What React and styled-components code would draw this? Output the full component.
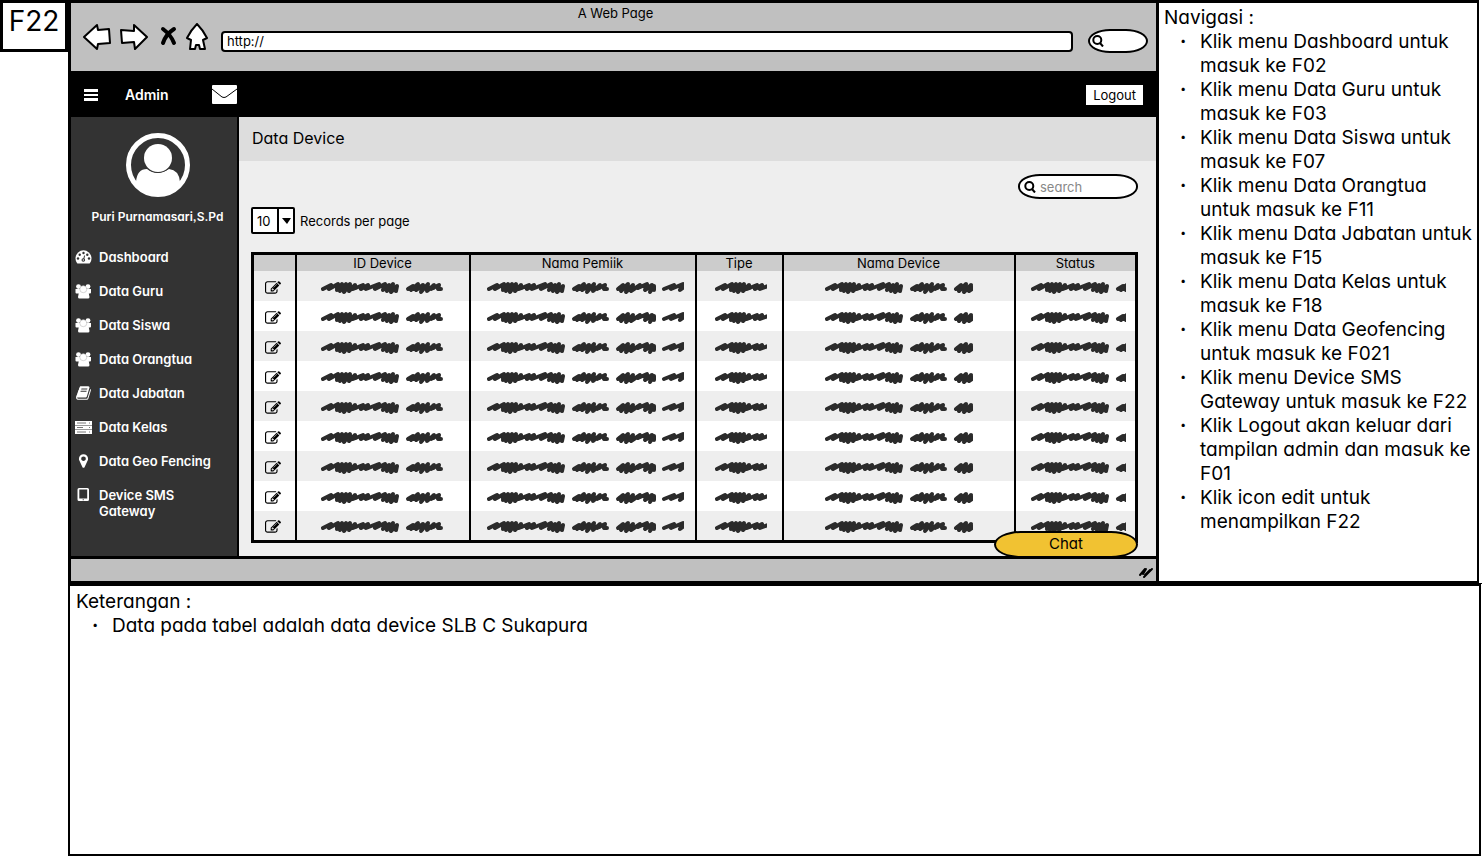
import React from "react";
import styled, { createGlobalStyle } from "styled-components";

const Global = createGlobalStyle`
  *, *::before, *::after { box-sizing: border-box; }
  body { margin: 0; background: #fff; color: #000; font: 13px/16px Inter, "Liberation Sans", sans-serif; font-feature-settings: "cv11", "ss03"; }
  ul, h1, h2, p { margin: 0; padding: 0; font-size: inherit; font-weight: inherit; }
  ul { list-style: none; }
  button, input, select { font: inherit; color: inherit; font-feature-settings: inherit; }
  svg { display: block; flex: none; }
`;

const Page = styled.div`
  display: flex;
  align-items: flex-start;
  min-height: 100vh;
`;
const Tag = styled.h1`
  flex: none;
  width: 68px;
  height: 52px;
  border: 3px solid #000;
  font-size: 28px;
  line-height: 36px;
  text-align: center;
`;
const Board = styled.main`
  flex: 1;
  min-width: 0;
  min-height: 100vh;
  display: flex;
  flex-direction: column;
`;
const Upper = styled.div`
  display: flex;
  border-bottom: 1px solid #000;
`;
const Browser = styled.section`
  flex: 1;
  min-width: 0;
  display: flex;
  flex-direction: column;
  border: 3px solid #000;
  border-width: 3px 2px 2px 3px;
  background: #c0c0c0;
`;
const Chrome = styled.header`
  height: 68px;
  padding: 2px 8px 0 12px;
`;
const PageTitle = styled.p`
  text-align: center;
  line-height: 17px;
`;
const Tools = styled.div`
  display: flex;
  align-items: center;
  padding-top: 1px;
`;
const ToolGroup = styled.div`
  display: flex;
  align-items: center;
  padding-bottom: 8px;
`;
const ToolButton = styled.button`
  border: 0;
  padding: 0;
  background: none;
  margin-right: ${(p) => p.$gap}px;
`;
const Address = styled.input`
  flex: 1;
  min-width: 0;
  height: 21px;
  margin: 0 15px 0 11px;
  padding: 0 4px;
  border: 2px solid #000;
  border-radius: 4px;
  background: #fff;
`;
const Pill = styled.label`
  display: flex;
  align-items: center;
  gap: 4px;
  width: ${(p) => p.$w}px;
  height: ${(p) => p.$h}px;
  padding: 0 5px 0 ${(p) => p.$pad}px;
  border: 2px solid #000;
  border-radius: 22px / 12px;
  background: #fff;
`;
const PillInput = styled.input`
  flex: 1;
  min-width: 0;
  border: 0;
  padding: 0;
  outline: 0;
  background: none;
  &::placeholder { color: #888; opacity: 1; }
`;
const TopBar = styled.div`
  display: flex;
  align-items: center;
  height: 46px;
  padding: 1px 13px 0;
  background: #000;
  color: #fff;
`;
const Brand = styled.span`
  margin: 0 43px 0 27px;
  font-size: 14px;
  font-weight: 600;
`;
const Logout = styled.button`
  margin-left: auto;
  height: 20px;
  padding: 0 7px;
  border: 0;
  background: #fff;
  color: #000;
`;
const Body = styled.div`
  display: flex;
  height: 442px;
  border-bottom: 3px solid #000;
`;
const Side = styled.aside`
  flex: none;
  width: 168px;
  border-right: 2px solid #000;
  background: #333;
  color: #fff;
  font-weight: 600;
`;
const Profile = styled.div`
  display: flex;
  flex-direction: column;
  align-items: center;
  gap: 12px;
  padding: 16px 0 0 7px;
  font-size: 12px;
`;
const Menu = styled.ul`
  display: flex;
  flex-direction: column;
  gap: 18px;
  padding: 24px 16px 0 4px;
`;
const MenuLink = styled.a`
  display: flex;
  gap: 7px;
  color: inherit;
  text-decoration: none;
`;
const Content = styled.section`
  flex: 1;
  min-width: 0;
  display: flex;
  flex-direction: column;
  background: #eee;
`;
const Heading = styled.h2`
  height: 44px;
  padding: 0 13px;
  background: #ddd;
  font-size: 16px;
  line-height: 42px;
`;
const Panel = styled.div`
  position: relative;
  padding: 13px 18px 0 12px;
`;
const SearchRow = styled.div`
  display: flex;
  justify-content: flex-end;
`;
const Records = styled.div`
  display: flex;
  align-items: center;
  gap: 5px;
  padding: 8px 0 18px;
`;
const SelectBox = styled.span`
  display: grid;
  grid-template-columns: 24px 16px;
  width: 44px;
  height: 27px;
  border: 2px solid #000;
  border-radius: 2px;
  background: #fff;
`;
const Select = styled.select`
  grid-area: 1 / 1 / 2 / 3;
  appearance: none;
  border: 0;
  padding: 0 4px;
  background: none;
`;
const Arrow = styled.span`
  grid-area: 1 / 2 / 2 / 3;
  display: grid;
  place-items: center;
  border-left: 2px solid #000;
  pointer-events: none;
`;
const Table = styled.table`
  width: 100%;
  table-layout: fixed;
  border: 3px solid #000;
  border-collapse: collapse;
`;
const Th = styled.th`
  width: ${(p) => p.$w};
  height: 16px;
  padding: 0;
  border-left: 2px solid #000;
  background: #ccc;
  font-weight: 400;
  line-height: 16px;
`;
const Row = styled.tr`
  height: 30px;
  background: #fff;
  &:nth-child(odd) { background: #eee; }
`;
const Td = styled.td`
  padding: 3px 0 0 ${(p) => p.$pad || 0}px;
  border-left: 2px solid #000;
  svg, button { margin: 0 auto; }
`;
const EditButton = styled.button`
  display: block;
  border: 0;
  padding: 0 2px 0 0;
  background: none;
`;
const Chat = styled.button`
  position: absolute;
  right: 18px;
  bottom: -15px;
  width: 144px;
  height: 27px;
  border: 2px solid #000;
  border-radius: 28px / 14px;
  background: #f1c232;
  font-size: 15px;
`;
const StatusBar = styled.footer`
  display: flex;
  justify-content: flex-end;
  align-items: center;
  height: 22px;
  padding: 4px 2px 0 0;
`;
const Notes = styled.aside`
  flex: none;
  width: 321px;
  border: 2px solid #000;
  border-width: 3px 2px 2px 1px;
  margin-right: 3px;
  padding: 3px 3px 3px 5px;
  font-size: 19px;
  line-height: 24px;
`;
const Caption = styled.section`
  flex: 1;
  border: 2px solid #000;
  padding: 4px 6px;
  margin-right: 1px;
  font-size: 19px;
  line-height: 24px;
`;
const Bullets = styled.ul`
  padding-left: 16px;
  li { display: flex; }
  li::before { content: "·"; flex: none; width: 20px; font-weight: 700; }
`;

const Svg = ({ w, h, box, children, ...rest }) => (
  <svg width={w} height={h} viewBox={box} fill="currentColor" aria-hidden="true" {...rest}>{children}</svg>
);
const EDIT = "M888 1184l116-116-152-152-116 116v56h96v96h56zm440-720q-16-16-33 1l-350 350q-17 17-1 33t33-1l350-350q17-17 1-33zm80 594v190q0 119-84.5 203.5t-203.5 84.5h-832q-119 0-203.5-84.5t-84.5-203.5v-832q0-119 84.500-203.5t203.5-84.5h832q63 0 117 25 15 7 18 23 3 17-9 29l-49 49q-14 14-32 8-23-6-45-6h-832q-66 0-113 47t-47 113v832q0 66 47 113t113 47h832q66 0 113-47t47-113v-126q0-13 9-22l64-64q15-15 35-7t20 29zm-96-738l288 288-672 672h-288v-288zm444 132l-92 92-288-288 92-92q28-28 68-28t68 28l152 152q28 28 28 68t-28 68z";
const BOOK = "M1703 478q40 57 18 129l-275 906q-19 64-76.5 107.5t-122.5 43.5h-923q-77 0-148.5-53.5t-99.5-131.5q-24-67-2-127 0-4 3-27t4-37q1-8-3-21.5t-3-19.5q2-11 8-21t16.5-23.5 16.5-23.5q23-38 45-91.5t30-91.5q3-10 .5-30t-.5-28q3-11 17-28t17-23q21-36 42-92t25-90q1-9-2.5-32t.5-28q4-13 22-30.5t22-22.5q19-26 42.5-84.5t27.5-96.5q1-8-3-25.5t-2-26.5q2-8 9-18t18-23 17-21q8-12 16.5-30.5t15-35 16-36 19.5-32 26.5-23.5 36-11.5 47.5 5.5l-1 3q38-9 51-9h761q74 0 114 56t18 130l-274 906q-36 119-71.5 153.5t-128.5 34.5h-869q-27 0-38 15-11 16-1 43 24 70 144 70h923q29 0 56-15.5t35-41.5l300-987q7-22 5-57 38 15 59 43zm-1064 2q-4 13 2 22.5t20 9.5h608q13 0 25.5-9.5t16.5-22.5l21-64q4-13-2-22.5t-20-9.5h-608q-13 0-25.5 9.5t-16.5 22.5zm-83 256q-4 13 2 22.5t20 9.5h608q13 0 25.5-9.5t16.5-22.5l21-64q4-13-2-22.5t-20-9.5h-608q-13 0-25.5 9.5t-16.5 22.5z";
const PIN = "M1152 640q0-106-75-181t-181-75-181 75-75 181 75 181 181 75 181-75 75-181zm256 0q0 109-33 179l-364 774q-16 33-47.5 52t-67.5 19-67.5-19-46.5-52l-365-774q-33-70-33-179 0-212 150-362t362-150 362 150 150 362z";

const Gauge = () => (
  <Svg w="17" h="16" box="0 0 17 16">
    <path d="M2 14A8 8 0 1 1 15 14Q14.500 14.500 14 14.500H3Q2.400 14.500 2 14Z" />
    <g fill="#333"><circle cx="3" cy="9.500" r="1.200" /><circle cx="4.700" cy="5.700" r="1.200" /><circle cx="8.500" cy="4" r="1.200" /><circle cx="12.300" cy="5.700" r="1.200" /><circle cx="14" cy="9.500" r="1.200" /><circle cx="8.300" cy="11" r="1.800" /></g>
    <path d="M8.500 11L9.600 6.500" stroke="#333" strokeWidth="1" />
    <circle cx="8.300" cy="11" r=".7" />
  </Svg>
);
const Users = () => (
  <Svg w="17" h="16" box="0 0 17 16">
    <circle cx="3.500" cy="3.600" r="2.400" /><circle cx="13" cy="3.600" r="2.400" />
    <path d="M.5 6h15.500v3.500q0 1-1 1h-1.200l.7 3.500q0 1.500-1.500 1.500H4.500Q3 15.500 3 14l.7-3.500H1.500q-1 0-1-1z" />
    <circle cx="8.300" cy="6.200" r="3.500" stroke="#bbb" strokeWidth=".6" />
  </Svg>
);
const Book = () => <Svg w="17" h="16" box="0 0 1792 1792"><path d={BOOK} /></Svg>;
const Server = () => (
  <Svg w="17" h="16" box="0 0 17 16">
    <path d="M0 2h17v4H0zM0 6.500h17v4H0zM0 11h17v4H0z" />
    <path d="M2 4h9M2 8.500h6M2 13h9M14 4h1M14 8.500h1M14 13h1" stroke="#777" strokeWidth="1" />
  </Svg>
);
const Pin = () => <Svg w="17" h="16" box="0 0 1792 1792"><path d={PIN} /></Svg>;
const Tablet = () => (
  <Svg w="17" h="16" box="0 0 17 16"><path fillRule="evenodd" d="M4 1h8.500q1.500 0 1.500 1.500v10q0 1.500-1.500 1.500H4q-1.500 0-1.500-1.500v-10Q2.500 1 4 1zM4.300 2.600v8.800h7.900V2.600zM7.700 12.200v1h1.100v-1z" /></Svg>
);
const Lens = ({ size }) => (
  <Svg w={size} h={size} box="0 0 12 12"><g fill="none" stroke="#000" strokeWidth="2"><circle cx="5.300" cy="5" r="4" /><path d="M8 8l3 3.500" /></g></Svg>
);

/* Scribbled placeholder copy: one slanted zigzag stroke per word. */
const WORDS = [
  "M2 9L10 5 8 9 17 4 16 10 21 4 19 11 25 4 23 12 29 4 28 11 34 5 32 9 42 5 40 9 47 5 45 9 58 4 54 9 64 4 62 10 68 5 66 11 72 4 70 12 76 6 75 11",
  "M87 9L92 6 90 10 97 4 95 10 102 5 100 12 107 4 106 11 113 5 110 9 118 5 117 9 120 9",
  "M131 9L136 5 134 11 141 4 139 12 146 5 144 11 153 5 151 8 160 4 158 10 165 5 163 12 167 6 167 10",
  "M177 9L187 5 184 9 196 4 193 10 201 4",
];
const Scribble = ({ w }) => (
  <svg width={w} height="16" viewBox={`0 0 ${w} 16`} fill="none" stroke="#2b2b2b" strokeWidth="4" strokeLinecap="round" strokeLinejoin="round" aria-hidden="true">
    {WORDS.map((d) => <path key={d} d={d} />)}
    <path d="M16 8H34M63 8H74M89 9H95M98 8H112M133 8H144M159 8H167" />
  </svg>
);

const MENU = [
  [Gauge, "Dashboard"], [Users, "Data Guru"], [Users, "Data Siswa"], [Users, "Data Orangtua"],
  [Book, "Data Jabatan"], [Server, "Data Kelas"], [Pin, "Data Geo Fencing"], [Tablet, "Device SMS Gateway"],
];
const COLUMNS = [
  { title: "ID Device", width: "174px", text: 124, pad: 0 },
  { title: "Nama Pemiik", width: "226px", text: 197, pad: 6 },
  { title: "Tipe", width: "87px", text: 52, pad: 4 },
  { title: "Nama Device", width: "auto", text: 148, pad: 0 },
  { title: "Status", width: "122px", text: 95, pad: 6 },
];
const NAV = [
  "Klik menu Dashboard untuk masuk ke F02", "Klik menu Data Guru untuk masuk ke F03",
  "Klik menu Data Siswa untuk masuk ke F07", "Klik menu Data Orangtua untuk masuk ke F11",
  "Klik menu Data Jabatan untuk masuk ke F15", "Klik menu Data Kelas untuk masuk ke F18",
  "Klik menu Data Geofencing untuk masuk ke F021", "Klik menu Device SMS Gateway untuk masuk ke F22",
  "Klik Logout akan keluar dari tampilan admin dan masuk ke F01", "Klik icon edit untuk menampilkan F22",
];

export default function App() {
  return (
    <>
      <Global />
      <Page>
        <Tag>F22</Tag>
        <Board>
          <Upper>
            <Browser>
              <Chrome>
                <PageTitle>A Web Page</PageTitle>
                <Tools>
                  <ToolGroup>
                    <ToolButton aria-label="Back" $gap={9}><Svg w="28" h="28" box="0 0 28 28"><path d="M1 14L14 2l1 5 11-1 1 14-12 1-1 5z" fill="#fff" stroke="#000" strokeWidth="2" strokeLinejoin="round" /></Svg></ToolButton>
                    <ToolButton aria-label="Forward" $gap={12}><Svg w="28" h="28" box="0 0 28 28"><path d="M27 14L14 2v6L1 7l1 13 12-1 1 7z" fill="#fff" stroke="#000" strokeWidth="2" strokeLinejoin="round" /></Svg></ToolButton>
                    <ToolButton aria-label="Stop" $gap={8}><Svg w="17" h="22" box="0 0 17 22"><path d="M3 3q8 6 11 14M14 3Q6 8 3 17" fill="none" stroke="#000" strokeWidth="4" strokeLinecap="round" /></Svg></ToolButton>
                    <ToolButton aria-label="Home" $gap={1}><Svg w="24" h="28" box="0 0 24 28"><path d="M12 1Q6 7 2 15l4 2-1 9h5l1-4h3l1 4h5l-2-9 4-2Q18 7 12 1z" fill="#fff" stroke="#000" strokeWidth="2" strokeLinejoin="round" /></Svg></ToolButton>
                  </ToolGroup>
                  <Address aria-label="Address" defaultValue="http://" />
                  <Pill $w={60} $h={24} $pad={2}><Lens size={12} /><PillInput aria-label="Web search" /></Pill>
                </Tools>
              </Chrome>
              <TopBar>
                <Svg w="14" h="12" box="0 0 14 12"><path d="M0 0h14v3H0zM0 5h14v2H0zM0 9h14v3H0z" /></Svg>
                <Brand>Admin</Brand>
                <Svg w="25" h="19" box="0 0 25 19"><rect width="25" height="19" rx="1" /><path d="M0 4l10 8q2 1 4 0l11-8" fill="none" stroke="#000" strokeWidth="1" /></Svg>
                <Logout>Logout</Logout>
              </TopBar>
              <Body>
                <Side>
                  <Profile>
                    <Svg w="64" h="64" box="0 0 64 64"><circle cx="32" cy="32" r="29.500" fill="none" stroke="#fff" strokeWidth="5" /><path d="M10 49q1-13 11-13 10 8 22 0 10 1 11 13Q45 61 32 61T10 49z" /><circle cx="32" cy="25" r="15" fill="#333" /><circle cx="32" cy="25" r="14" /></Svg>
                    Puri Purnamasari,S.Pd
                  </Profile>
                  <Menu>
                    {MENU.map(([Icon, label]) => <li key={label}><MenuLink href="#"><Icon />{label}</MenuLink></li>)}
                  </Menu>
                </Side>
                <Content>
                  <Heading>Data Device</Heading>
                  <Panel>
                    <SearchRow><Pill $w={120} $h={25} $pad={4}><Lens size={12} /><PillInput aria-label="Search" placeholder="search" /></Pill></SearchRow>
                    <Records>
                      <SelectBox>
                        <Select id="records" defaultValue="10"><option>10</option></Select>
                        <Arrow><Svg w="9" h="6" box="0 0 9 6"><path d="M0 0h9L5 6z" /></Svg></Arrow>
                      </SelectBox>
                      <label htmlFor="records">Records per page</label>
                    </Records>
                    <Table>
                      <thead><tr><Th $w="43px" aria-label="Edit" />{COLUMNS.map((c) => <Th key={c.title} $w={c.width}>{c.title}</Th>)}</tr></thead>
                      <tbody>
                        {Array.from({ length: 9 }, (_, i) => (
                          <Row key={i}>
                            <Td><EditButton aria-label="Edit"><Svg w="16" h="16" box="0 0 1792 1792"><path d={EDIT} /></Svg></EditButton></Td>
                            {COLUMNS.map((c) => <Td key={c.title} $pad={c.pad}><Scribble w={c.text} /></Td>)}
                          </Row>
                        ))}
                      </tbody>
                    </Table>
                    <Chat>Chat</Chat>
                  </Panel>
                </Content>
              </Body>
              <StatusBar><Svg w="16" h="14" box="0 0 16 14"><path d="M2 10l5-6M6 12l8-8M5 9l3-5M7 10l5-5" fill="none" stroke="#000" strokeWidth="2" strokeLinecap="round" /></Svg></StatusBar>
            </Browser>
            <Notes>
              <p>Navigasi :</p>
              <Bullets>{NAV.map((t) => <li key={t}>{t}</li>)}</Bullets>
            </Notes>
          </Upper>
          <Caption>
            <p>Keterangan :</p>
            <Bullets><li>Data pada tabel adalah data device SLB C Sukapura</li></Bullets>
          </Caption>
        </Board>
      </Page>
    </>
  );
}
